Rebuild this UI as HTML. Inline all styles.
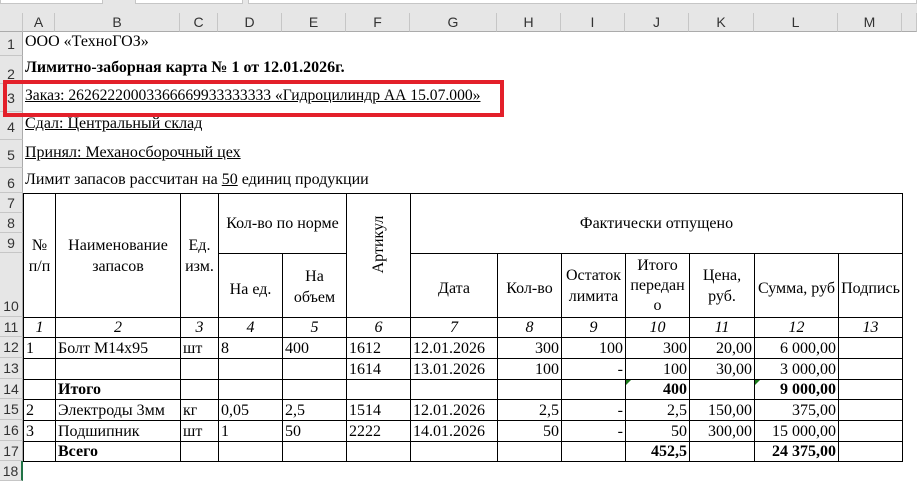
<!DOCTYPE html>
<html><head><meta charset="utf-8">
<style>
*{margin:0;padding:0;box-sizing:border-box}
body{width:917px;height:475px;overflow:hidden;background:#fff;position:relative;font-family:"Liberation Serif",serif;font-size:16px;color:#000}
.top{position:absolute;left:0;top:0;width:917px;height:32px;background:#e6e6e6}
.box{position:absolute;top:-2px;height:6px;background:#fff;border:1px solid #c6c6c6}
.ch{position:absolute;top:13px;height:19px;border-right:1px solid #c6c6c6;font:14px "Liberation Sans",sans-serif;color:#333;text-align:center;line-height:19px;border-bottom:1px solid #ababab}
.rh{position:absolute;left:0;width:23px;background:#e6e6e6;border-bottom:1px solid #c6c6c6;border-right:1px solid #ababab;font:14px "Liberation Sans",sans-serif;color:#333;text-align:center}
.t{position:absolute;left:25px;white-space:nowrap}
table{position:absolute;left:23px;top:193px;border-collapse:collapse;table-layout:fixed;width:879px}
td{border:1px solid #000;padding:0 2px;white-space:nowrap;overflow:hidden;line-height:17px}
.c{text-align:center}.r{text-align:right}.b{font-weight:bold}
.i td{font-style:italic;text-align:center}
.tri{position:absolute;width:0;height:0;border-top:5px solid #1a7a1a;border-right:5px solid transparent}
</style></head><body>
<div class="top"></div>
<div class="box" style="left:0;width:103px"></div>
<div class="box" style="left:135px;width:108px"></div>
<div class="box" style="left:248px;width:669px"></div>
<div class="ch" style="left:0;width:23px;border-bottom:1px solid #ababab"></div>
<div class="ch" style="left:23px;width:32px">A</div>
<div class="ch" style="left:55px;width:125px">B</div>
<div class="ch" style="left:180px;width:38px">C</div>
<div class="ch" style="left:218px;width:64px">D</div>
<div class="ch" style="left:282px;width:64px">E</div>
<div class="ch" style="left:346px;width:64px">F</div>
<div class="ch" style="left:410px;width:87px">G</div>
<div class="ch" style="left:497px;width:64px">H</div>
<div class="ch" style="left:561px;width:64px">I</div>
<div class="ch" style="left:625px;width:64px">J</div>
<div class="ch" style="left:689px;width:65px">K</div>
<div class="ch" style="left:754px;width:84px">L</div>
<div class="ch" style="left:838px;width:64px">M</div>
<div class="ch" style="left:902px;width:15px"></div>

<div class="rh" style="top:32px;height:24px;line-height:24px;padding-top:0">1</div>
<div class="rh" style="top:56px;height:28px;line-height:36px">2</div>
<div class="rh" style="top:84px;height:28px;line-height:28px">3</div>
<div class="rh" style="top:112px;height:28px;line-height:30px">4</div>
<div class="rh" style="top:140px;height:28px;line-height:30px">5</div>
<div class="rh" style="top:168px;height:25px;line-height:30px">6</div>
<div class="rh" style="top:193px;height:20px;line-height:20px">7</div>
<div class="rh" style="top:213px;height:20px;line-height:20px">8</div>
<div class="rh" style="top:233px;height:20px;line-height:20px">9</div>
<div class="rh" style="top:253px;height:64px;line-height:106px">10</div>
<div class="rh" style="top:317px;height:20px;line-height:20px">11</div>
<div class="rh" style="top:337px;height:21px;line-height:21px">12</div>
<div class="rh" style="top:358px;height:21px;line-height:21px">13</div>
<div class="rh" style="top:379px;height:20px;line-height:20px">14</div>
<div class="rh" style="top:399px;height:21px;line-height:21px">15</div>
<div class="rh" style="top:420px;height:21px;line-height:21px">16</div>
<div class="rh" style="top:441px;height:20px;line-height:20px">17</div>
<div class="rh" style="top:461px;height:20px;line-height:20px;border-right:2px solid #217346">18</div>

<div class="t" style="top:33px">ООО «ТехноГОЗ»</div>
<div class="t b" style="top:59px">Лимитно-заборная карта № 1 от 12.01.2026г.</div>
<div class="t" style="top:87px;font-size:15.6px;text-decoration:underline">Заказ: 26262220003366669933333333 «Гидроцилиндр АА 15.07.000»</div>
<div style="position:absolute;left:3px;top:80px;width:501px;height:37px;border:4px solid #e3202a"></div>
<div class="t" style="top:115px;text-decoration:underline">Сдал: Центральный склад</div>
<div class="t" style="top:144px;text-decoration:underline">Принял: Механосборочный цех</div>
<div class="t" style="top:171px">Лимит запасов рассчитан на <u>50</u> единиц продукции</div>

<table>
<colgroup><col style="width:32px"><col style="width:125px"><col style="width:38px"><col style="width:64px"><col style="width:64px"><col style="width:64px"><col style="width:87px"><col style="width:64px"><col style="width:64px"><col style="width:64px"><col style="width:65px"><col style="width:84px"><col style="width:64px"></colgroup>
<tr style="height:60px">
<td rowspan="2" class="c" style="line-height:21px">№<br>п/п</td>
<td rowspan="2" class="c" style="line-height:21px">Наименование<br>запасов</td>
<td rowspan="2" class="c" style="line-height:21px;padding:0">Ед.<br>изм.</td>
<td colspan="2" class="c">Кол-во по норме</td>
<td rowspan="2" class="c"><div style="transform:rotate(-90deg);white-space:nowrap;margin-top:-20px">Артикул</div></td>
<td colspan="7" class="c">Фактически отпущено</td>
</tr>
<tr style="height:64px">
<td class="c" style="padding-top:8px">На ед.</td>
<td class="c" style="line-height:21px;padding-top:2px">На<br>объем</td>
<td class="c" style="padding-top:6px">Дата</td>
<td class="c" style="padding-top:6px">Кол-во</td>
<td class="c" style="line-height:21px;padding:0">Остаток<br>лимита</td>
<td class="c" style="line-height:20px;padding:0">Итого<br>передан<br>о</td>
<td class="c" style="line-height:21px">Цена,<br>руб.</td>
<td class="c" style="padding:6px 0 0">Сумма, руб</td>
<td class="c" style="padding:6px 0 0">Подпись</td>
</tr>
<tr class="i" style="height:20px"><td>1</td><td>2</td><td>3</td><td>4</td><td>5</td><td>6</td><td>7</td><td>8</td><td>9</td><td>10</td><td>11</td><td>12</td><td>13</td></tr>
<tr style="height:21px"><td>1</td><td>Болт М14х95</td><td>шт</td><td>8</td><td>400</td><td>1612</td><td>12.01.2026</td><td class="r">300</td><td class="r">100</td><td class="r">300</td><td class="r">20,00</td><td class="r">6 000,00</td><td></td></tr>
<tr style="height:21px"><td></td><td></td><td></td><td></td><td></td><td>1614</td><td>13.01.2026</td><td class="r">100</td><td class="r">-</td><td class="r">100</td><td class="r">30,00</td><td class="r">3 000,00</td><td></td></tr>
<tr style="height:20px"><td></td><td class="b">Итого</td><td></td><td></td><td></td><td></td><td></td><td></td><td></td><td class="r b">400</td><td></td><td class="r b">9 000,00</td><td></td></tr>
<tr style="height:21px"><td>2</td><td>Электроды 3мм</td><td>кг</td><td>0,05</td><td>2,5</td><td>1514</td><td>12.01.2026</td><td class="r">2,5</td><td class="r">-</td><td class="r">2,5</td><td class="r">150,00</td><td class="r">375,00</td><td></td></tr>
<tr style="height:21px"><td>3</td><td>Подшипник</td><td>шт</td><td>1</td><td>50</td><td>2222</td><td>14.01.2026</td><td class="r">50</td><td class="r">-</td><td class="r">50</td><td class="r">300,00</td><td class="r">15 000,00</td><td></td></tr>
<tr style="height:20px"><td></td><td class="b">Всего</td><td></td><td></td><td></td><td></td><td></td><td></td><td></td><td class="r b">452,5</td><td></td><td class="r b">24 375,00</td><td></td></tr>
</table>
<div class="tri" style="left:626px;top:380px"></div>
<div class="tri" style="left:755px;top:380px"></div>
</body></html>
